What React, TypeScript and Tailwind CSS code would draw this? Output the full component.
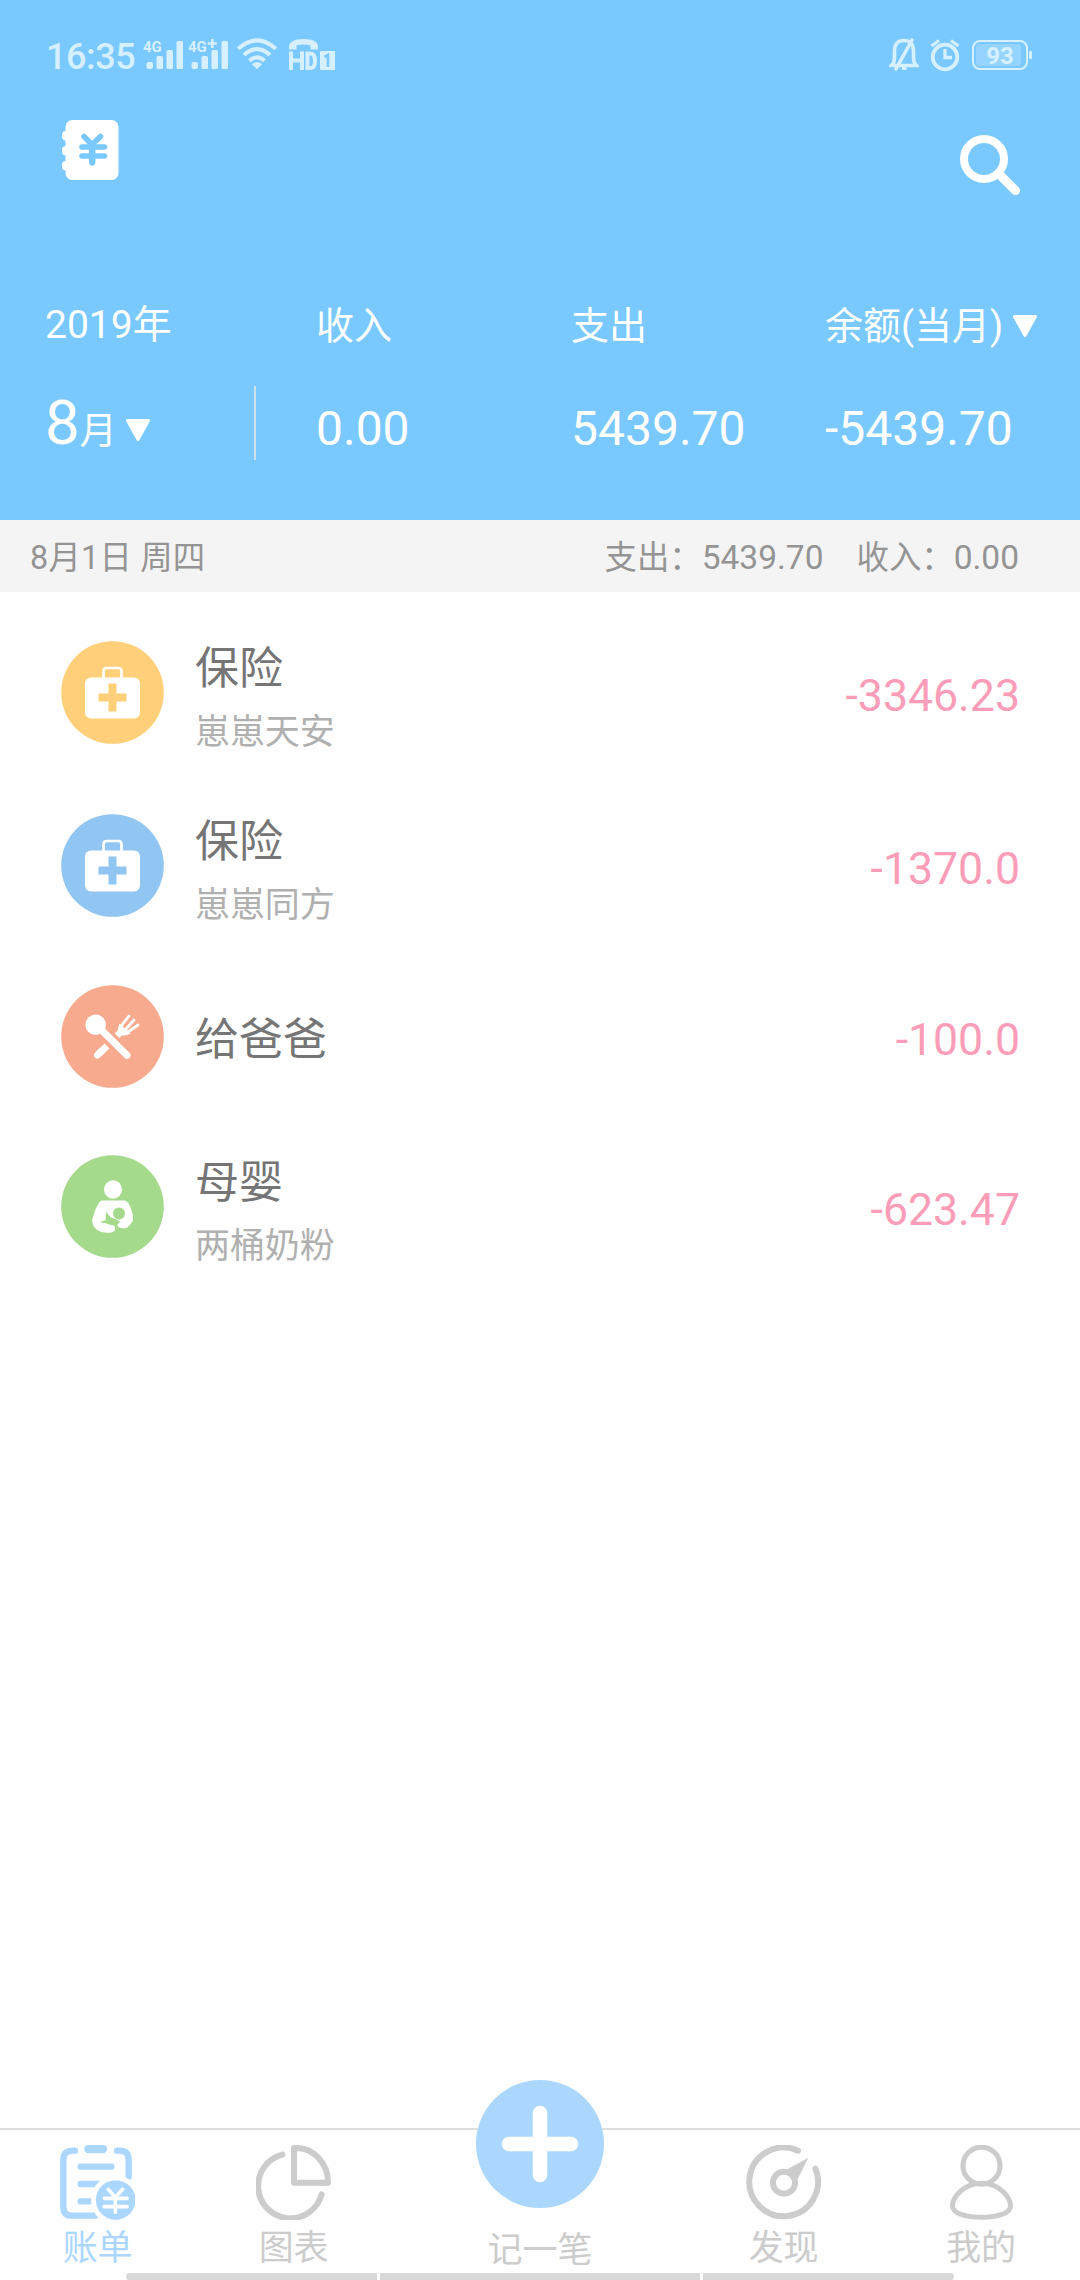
import type { ReactNode } from "react";

function SignalIcon({ plus, width }: { plus?: boolean; width: number }) {
  return (
    <svg width={width} height="36" viewBox={`0 0 ${width} 36`} fill="#d6f0ff" className="shrink-0">
      <text x="0" y="15" fontSize="15" fontWeight="700" fontFamily="Roboto, sans-serif">
        4G
      </text>
      {plus && <path d="M24.3 2V11M19.800 6.500H28.800" stroke="#d6f0ff" strokeWidth="2.500" />}
      <rect x="3.5" y="25" width="6.5" height="7" rx="2" />
      <rect x="13.5" y="19" width="6.5" height="13" rx="1.5" />
      <rect x="23.5" y="13" width="6.5" height="19" rx="1.5" />
      <rect x="33.5" y="4" width="6.5" height="28" rx="1.5" />
    </svg>
  );
}

function WifiIcon() {
  return (
    <svg width="42" height="36" viewBox="0 0 42 36" fill="none" stroke="#d6f0ff" strokeWidth="4" className="shrink-0">
      <path d="M2.2 11.7Q21-5 39.8 11.7" />
      <path d="M8 18Q21 6.3 34 18" />
      <path d="M13.5 23.7Q21 16.9 28.5 23.7" />
      <path d="M21 32l-5.2-4.8Q21 22.9 26.2 27.2Z" fill="#d6f0ff" stroke="none" />
    </svg>
  );
}

function HdIcon() {
  return (
    <svg width="50" height="36" viewBox="0 0 50 36" fill="#d6f0ff" className="shrink-0">
      <path d="M2 12.5V9.5Q2.5 2 16.5 2T31 9.5V12.5H23.5V8.5Q16.5 6.5 9.5 8.5V12.5Z" />
      <path d="M4 14.5V33M15 14.5V33M4 23.5H15" fill="none" stroke="#d6f0ff" strokeWidth="4" />
      <path d="M20.5 16.5V31H23.5Q28 31 28 23.8T23.5 16.5Z" fill="none" stroke="#d6f0ff" strokeWidth="4" />
      <rect x="33" y="14" width="15" height="19" rx="1" />
      <path d="M37.5 20l3.5-2v12" fill="none" stroke="#79c9ff" strokeWidth="2.6" />
    </svg>
  );
}

function MutedBellIcon() {
  return (
    <svg width="30" height="36" viewBox="0 0 30 36" fill="none" stroke="#d6f0ff" strokeWidth="3.6" className="shrink-0">
      <path d="M2.5 28.5H27.5Q24.5 26 24.5 20V14Q24.5 3.5 15 3.5T5.5 14V20Q5.5 26 2.5 28.5Z" />
      <path d="M23 3L7 32" strokeLinecap="round" />
      <path d="M13 31.5H17.5" strokeWidth="3" />
    </svg>
  );
}

function AlarmIcon() {
  return (
    <svg width="30" height="36" viewBox="0 0 30 36" fill="none" stroke="#d6f0ff" className="shrink-0">
      <circle cx="15" cy="20" r="12.3" strokeWidth="3.8" />
      <path d="M15 12V20.5H22" strokeWidth="3.4" />
      <path d="M1.5 9L9 3.5M28.5 9L21 3.5" strokeWidth="3" />
    </svg>
  );
}

function BatteryIcon() {
  return (
    <svg width="62" height="36" viewBox="0 0 62 36" className="shrink-0">
      <rect x="1" y="4" width="54" height="28" rx="7" fill="none" stroke="#d6f0ff" strokeWidth="2" />
      <rect x="4" y="7" width="45" height="22" rx="3" fill="#94d4ff" />
      <rect x="57" y="14" width="3" height="8" rx="1" fill="#d6f0ff" />
      <text x="28" y="26.5" textAnchor="middle" fontSize="24" fontWeight="700" fill="#d6f0ff" fontFamily="Roboto, sans-serif">
        93
      </text>
    </svg>
  );
}

function NotebookIcon() {
  return (
    <svg width="57" height="60" viewBox="0 0 57 60">
      <rect x="3.5" width="53" height="60" rx="7" fill="#fff" />
      <rect y="11" width="9" height="9.5" rx="4" fill="#fff" />
      <rect y="26" width="9" height="9.5" rx="4" fill="#fff" />
      <rect y="41" width="9" height="9.5" rx="4" fill="#fff" />
      <g fill="none" stroke="#79c9ff" strokeWidth="5.6" strokeLinecap="round" strokeLinejoin="round">
        <path d="M22 16.5L30 24.5L38.5 16.5" />
        <path d="M20 27H42.5M20 36H42.5" />
        <path d="M30.2 24.5V43" strokeWidth="6.5" strokeLinecap="butt" />
        <path d="M30.2 41V43" />
      </g>
    </svg>
  );
}

function SearchIcon() {
  return (
    <svg width="60" height="60" viewBox="0 0 60 60" fill="none" stroke="#fff">
      <circle cx="24" cy="24" r="20" strokeWidth="8" />
      <path d="M38.5 38.5L55.5 55.5" strokeWidth="9" strokeLinecap="round" />
    </svg>
  );
}

function Triangle() {
  return (
    <svg width="24" height="22" viewBox="0 0 24 22" className="shrink-0">
      <path d="M1.5 1.5H22.5L12 20.5Z" fill="#fff" stroke="#fff" strokeWidth="3" strokeLinejoin="round" />
    </svg>
  );
}

function Disc({ color, children }: { color: string; children: ReactNode }) {
  return (
    <svg width="103" height="103" viewBox="-51.5 -51.5 103 103" className="shrink-0">
      <circle r="51.3" fill={color} />
      {children}
    </svg>
  );
}

function MedicalBag({ color }: { color: string }) {
  return (
    <Disc color={color}>
      <rect x="-27.5" y="-15" width="55" height="41" rx="6" fill="#fff" />
      <path d="M-9 -14V-21Q-9 -24.5 -6 -24.5H6Q9 -24.5 9 -21V-14" fill="none" stroke="#fff" strokeWidth="2.7" />
      <path d="M-4 -9H4V1H14V9H4V19H-4V9H-14V1H-4Z" fill={color} />
    </Disc>
  );
}

function Cutlery() {
  return (
    <Disc color="#f8aa8f">
      <g stroke="#fff" fill="none" strokeLinecap="round">
        <circle cx="-16.8" cy="-11.7" r="10.3" fill="#fff" stroke="none" />
        <path d="M-10 -5.5L14.5 18.8" strokeWidth="7" />
        <path d="M-15 18.5L-11 14.8" strokeWidth="7" />
        <path d="M-13 16.5L-5.5 9.5" strokeWidth="7" strokeLinecap="butt" />
        <path d="M4.5 -.8L11 -7" strokeWidth="6.5" strokeLinecap="butt" />
        <path d="M16.5 -20.5L9 -11M21.5 -16.5L13 -7M25.5 -11.5L15.5 -4.5" strokeWidth="2.8" />
        <path d="M7 -13L18 -3Q13 0 8.5 -1.5T5.5 -8Z" fill="#fff" stroke="none" />
      </g>
    </Disc>
  );
}

function MotherBaby() {
  return (
    <Disc color="#a5da8c">
      <ellipse cx=".5" cy="-17" rx="9" ry="9.3" fill="#fff" />
      <path
        d="M-10 -6H12Q16 -5 18 1L20.5 9V14Q18 19 14 21.5Q10 22.8 6 20.5L4.5 18.5L8 15L3 14.5L-1 18.5Q2 18.5 2.5 20.5V24Q0 26.5 -6 26.3Q-14 25.8 -18 21Q-21 17 -20 12Q-17 1 -13 -4.5Q-12 -6 -10 -6Z"
        fill="#fff"
      />
      <circle cx="6.5" cy="7" r="6" fill="#a5da8c" />
      <path d="M-6.2 5Q-4 9 -1.500 11L6 13.8L3.5 17.8L-2 18.6Q-5 16.5 -12 16Q-11.5 14.5 -7 13.8Q-6.5 10 -6.2 5Z" fill="#a5da8c" />
    </Disc>
  );
}

function BillIcon() {
  return (
    <svg width="75" height="75" viewBox="180 255 225 225" fill="none" stroke="#abd7ff" strokeWidth="19" strokeLinecap="round">
      <path d="M225 272H216Q190 274 190 300V440Q190 467 216 467H285" />
      <path d="M351 272H362Q386 274 386 300V350" />
      <path d="M265 267H309" strokeWidth="25" />
      <path d="M242 320H334M242 372H300M242 424H270" />
      <circle cx="347" cy="420" r="74" fill="#fefefe" stroke="none" />
      <circle cx="347" cy="420" r="59.5" fill="#abd7ff" stroke="none" />
      <g stroke="#fefefe" strokeWidth="11">
        <path d="M325 388L346 412L368 388" />
        <path d="M346 412V457M313 415H381M313 440H381" />
      </g>
    </svg>
  );
}

function ChartIcon() {
  return (
    <svg width="75" height="75" viewBox="768 255 225 225" fill="none" stroke="#ccc" strokeWidth="18" strokeLinecap="round">
      <path d="M847 284A97 97 0 1 0 965 403" />
      <path d="M882 264V368H984Q984 322 954 292T882 264Z" strokeLinejoin="round" />
    </svg>
  );
}

function DiscoverIcon() {
  return (
    <svg width="75" height="75" viewBox="138 255 225 225" fill="none" stroke="#ccc" strokeWidth="18" strokeLinecap="round">
      <path d="M294 272A103 103 0 1 0 346 326" />
      <circle cx="252" cy="368" r="33" />
      <path d="M262 328L325 293L292 359Z" fill="#ccc" stroke="none" />
    </svg>
  );
}

function PersonIcon() {
  return (
    <svg width="75" height="75" viewBox="730.5 255 225 225" fill="none" stroke="#ccc" strokeWidth="15">
      <circle cx="843" cy="317" r="55.5" />
      <path d="M843 370C792 370 756 410 756 438C756 462 800 472 843 472S930 462 930 438C930 410 894 370 843 370Z" />
    </svg>
  );
}

type Entry = { icon: ReactNode; title: string; note?: string; amount: string; row: string };

const entries: Entry[] = [
  { icon: <MedicalBag color="#ffd079" />, title: "保险", note: "崽崽天安", amount: "-3346.23", row: "h-[173px]" },
  { icon: <MedicalBag color="#91c6f2" />, title: "保险", note: "崽崽同方", amount: "-1370.0", row: "h-[173px]" },
  { icon: <Cutlery />, title: "给爸爸", amount: "-100.0", row: "h-[169px]" },
  { icon: <MotherBaby />, title: "母婴", note: "两桶奶粉", amount: "-623.47", row: "h-[171px]" },
];

function Tab({ icon, label, active }: { icon: ReactNode; label: string; active?: boolean }) {
  return (
    <div className={`flex flex-col items-center pt-[15px] ${active ? "text-[#abd7ff]" : "text-[#ccc]"}`}>
      {icon}
      <span className="mt-[9px] text-[35px] leading-[40px] tracking-[-0.3px]">{label}</span>
    </div>
  );
}

export default function App() {
  return (
    <div className="flex h-[2280px] w-[1080px] flex-col overflow-hidden bg-[#fefefe] font-['Roboto','Noto_Sans_CJK_SC',sans-serif]">
      <header className="h-[520px] shrink-0 bg-[#79c9ff] text-white">
        <div className="flex h-[78px] items-start justify-between pt-[37px] pr-[46px] pl-[46px] text-[#d6f0ff]">
          <div className="flex h-9 items-start">
            <span className="mt-[2px] w-[97px] text-[36px] leading-[36px] font-medium tracking-[-0.4px]">16:35</span>
            <SignalIcon width={45} />
            <SignalIcon plus width={48} />
            <WifiIcon />
            <div className="w-[9px]" />
            <HdIcon />
          </div>
          <div className="flex h-9 items-start">
            <MutedBellIcon />
            <div className="w-[11px]" />
            <AlarmIcon />
            <div className="w-[12px]" />
            <BatteryIcon />
          </div>
        </div>

        <div className="flex h-[223px] items-start justify-between pt-[42px] pr-[60px] pl-[62px]">
          <NotebookIcon />
          <div className="pt-[15px]">
            <SearchIcon />
          </div>
        </div>

        <div className="grid h-12 grid-cols-[271px_255px_254px_1fr] pl-[45px] text-[38px] leading-[50px]">
          <span className="text-[39px] leading-[48px]">2019年</span>
          <span>收入</span>
          <span>支出</span>
          <span className="flex items-center whitespace-nowrap">
            余额(当月)
            <span className="ml-2.5">
              <Triangle />
            </span>
          </span>
        </div>
        <div className="mt-[37px] grid h-[74px] grid-cols-[271px_255px_254px_1fr] grid-rows-[74px] pl-[45px] text-[48px]">
          <div className="mr-[60px] flex items-start border-r-2 border-[#cfe0ea]">
            <span className="h-[74px] text-[62px] leading-[74px]">
              8<span className="text-[37px] leading-none">月</span>
            </span>
            <span className="mt-[33px] ml-[9px]">
              <Triangle />
            </span>
          </div>
          <span className="pt-[11px] leading-[64px]">0.00</span>
          <span className="pt-[11px] leading-[64px]">5439.70</span>
          <span className="pt-[11px] leading-[64px]">-5439.70</span>
        </div>
      </header>

      <div className="flex h-[72px] shrink-0 items-center justify-between bg-[#f4f4f4] pt-[4px] pr-[61px] pl-[30px] text-[32.4px] leading-[40px] text-[#949494]">
        <span className="tracking-[0.2px]">8月1日 周四</span>
        <span className="flex gap-[33px]">
          <span>
            支出：<span className="text-[33.5px]">5439.70</span>
          </span>
          <span>
            收入：<span className="text-[33.5px]">0.00</span>
          </span>
        </span>
      </div>

      <main className="flex flex-1 flex-col pt-[14px]">
        {entries.map((e) => (
          <div key={e.amount} className={`flex items-center pr-[60px] pl-[61px] ${e.row}`}>
            {e.icon}
            <div className={`ml-[31px] flex flex-1 flex-col ${e.note ? "pt-[14px]" : "pt-[7px]"}`}>
              <span className="text-[44px] leading-[58px] text-[#757575]">{e.title}</span>
              {e.note && (
                <span className="mt-2 text-[35px] leading-[54px] tracking-[-0.1px] text-[#b0b0b0]">{e.note}</span>
              )}
            </div>
            <span className="pt-[6px] text-[44.6px] leading-[52px] text-[#fb9db9]">{e.amount}</span>
          </div>
        ))}
      </main>

      <nav className="grid h-[145px] shrink-0 grid-cols-[195px_197px_296px_191px_201px] border-t-2 border-[#dedede]">
        <Tab icon={<BillIcon />} label="账单" active />
        <Tab icon={<ChartIcon />} label="图表" />
        <div className="flex flex-col items-center text-[#ccc]">
          <div className="-mt-[50px] flex h-32 w-32 shrink-0 items-center justify-center rounded-full bg-[#abd7ff]">
            <svg width="78" height="78" viewBox="0 0 78 78" stroke="#fefefe" strokeWidth="14.5" strokeLinecap="round">
              <path d="M8 39H70M39 8V70" />
            </svg>
          </div>
          <span className="mt-[23px] text-[35px] leading-[40px]">记一笔</span>
        </div>
        <Tab icon={<DiscoverIcon />} label="发现" />
        <div className="pl-[3px]">
          <Tab icon={<PersonIcon />} label="我的" />
        </div>
      </nav>
      <div className="flex h-[7px] shrink-0 gap-[3px] pl-[126px]">
        <div className="w-[251px] rounded-l-full bg-[#d8d8d8]" />
        <div className="w-[320px] bg-[#d8d8d8]" />
        <div className="w-[251px] rounded-r-full bg-[#d8d8d8]" />
      </div>
    </div>
  );
}
